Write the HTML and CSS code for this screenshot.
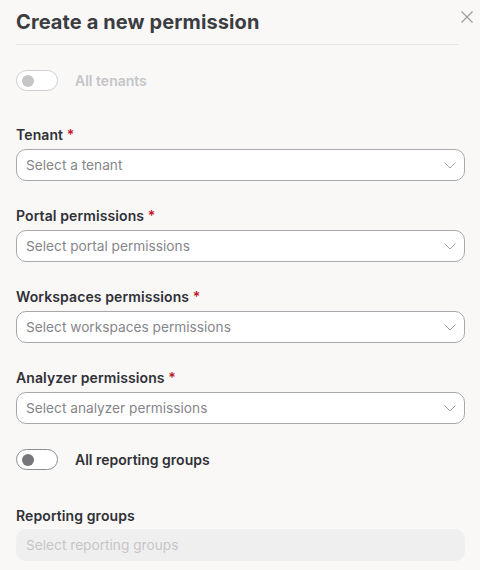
FILE: index.html
```html
<!DOCTYPE html>
<html lang="en">
<head>
<meta charset="utf-8">
<title>Create a new permission</title>
<link rel="stylesheet" href="styles.css">
</head>
<body>
<div class="panel">
  <div class="header">
    <h1 class="title">Create a new permission</h1>
    <button class="close" type="button" aria-label="Close">
      <svg width="12" height="12" viewBox="0 0 12 12"><path d="M0.5 0.5 L11.5 11.5 M11.5 0.5 L0.5 11.5" stroke="#9b9b9e" stroke-width="1.1" fill="none"/></svg>
    </button>
  </div>

  <div class="switch-row switch-row--first is-disabled">
    <span class="switch"><span class="knob"></span></span>
    <span class="switch-label">All tenants</span>
  </div>

  <div class="field field--first">
    <div class="label">Tenant <span class="req">*</span></div>
    <div class="select"><span class="placeholder">Select a tenant</span><svg class="chev" width="12" height="7" viewBox="0 0 12 7"><path d="M0.5 0.5 L6 6 L11.5 0.5" stroke="#a2a2a6" stroke-width="1" fill="none"/></svg></div>
  </div>

  <div class="field">
    <div class="label">Portal permissions <span class="req">*</span></div>
    <div class="select"><span class="placeholder">Select portal permissions</span><svg class="chev" width="12" height="7" viewBox="0 0 12 7"><path d="M0.5 0.5 L6 6 L11.5 0.5" stroke="#a2a2a6" stroke-width="1" fill="none"/></svg></div>
  </div>

  <div class="field">
    <div class="label">Workspaces permissions <span class="req">*</span></div>
    <div class="select"><span class="placeholder">Select workspaces permissions</span><svg class="chev" width="12" height="7" viewBox="0 0 12 7"><path d="M0.5 0.5 L6 6 L11.5 0.5" stroke="#a2a2a6" stroke-width="1" fill="none"/></svg></div>
  </div>

  <div class="field">
    <div class="label">Analyzer permissions <span class="req">*</span></div>
    <div class="select"><span class="placeholder">Select analyzer permissions</span><svg class="chev" width="12" height="7" viewBox="0 0 12 7"><path d="M0.5 0.5 L6 6 L11.5 0.5" stroke="#a2a2a6" stroke-width="1" fill="none"/></svg></div>
  </div>

  <div class="switch-row switch-row--second">
    <span class="switch"><span class="knob"></span></span>
    <span class="switch-label">All reporting groups</span>
  </div>

  <div class="field field--last">
    <div class="label label--tight">Reporting groups</div>
    <div class="select select--disabled"><span class="placeholder">Select reporting groups</span></div>
  </div>
</div>
</body>
</html>
```

FILE: styles.css
```css
* { box-sizing: border-box; }

html, body {
  margin: 0;
  padding: 0;
  background: #f9f8f7;
  font-family: Inter, "Liberation Sans", Arial, sans-serif;
  color: #2f3136;
}

.panel {
  position: relative;
  padding: 10px 15px 0 16px;
  width: 480px;
  height: 570px;
  overflow: hidden;
}

.header {
  margin-right: 6px;
  border-bottom: 1px solid #e8e7e5;
  padding-bottom: 10px;
}

.title {
  margin: 0;
  font-size: 20px;
  line-height: 24px;
  font-weight: 700;
  color: #3b3d42;
  letter-spacing: 0.1px;
}

.close {
  position: absolute;
  top: 11px;
  right: 7px;
  width: 12px;
  height: 12px;
  padding: 0;
  border: 0;
  background: none;
  display: block;
}
.close svg { display: block; }

.switch-row {
  display: flex;
  align-items: center;
  gap: 17px;
  height: 21px;
}
.switch-row--first { margin-top: 25px; }
.switch-row--second { margin-top: 25px; }

.switch {
  width: 42px;
  height: 21px;
  border: 1px solid #8e8e92;
  border-radius: 11px;
  background: #ffffff;
  display: flex;
  align-items: center;
  padding-left: 5px;
}
.knob {
  width: 12px;
  height: 12px;
  border-radius: 50%;
  background: #76777b;
}
.switch-label {
  font-size: 14px;
  font-weight: 600;
  color: #2f3136;
}

.is-disabled .switch { border-color: #cfcfd1; }
.is-disabled .knob { background: #c6c6c8; }
.is-disabled .switch-label { color: #c4c5c8; }

.field { margin-top: 26px; }
.field--first { margin-top: 35px; }
.field--last { margin-top: 37px; }

.label {
  font-size: 14px;
  line-height: 17px;
  font-weight: 600;
  color: #2f3136;
  margin-bottom: 6px;
  letter-spacing: 0.1px;
}
.label--tight { margin-bottom: 5px; }
.req { color: #c4162a; }

.select {
  height: 32px;
  border: 1px solid #a9a9ad;
  border-radius: 10px;
  background: #ffffff;
  display: flex;
  align-items: center;
  justify-content: space-between;
  padding: 0 8px 0 9px;
}
.placeholder {
  font-size: 13.7px;
  color: #85868b;
}
.chev { display: block; }

.select--disabled {
  border-color: #f0f0f0;
  background: #efefef;
}
.select--disabled .placeholder { color: #c6c6c8; }
```
